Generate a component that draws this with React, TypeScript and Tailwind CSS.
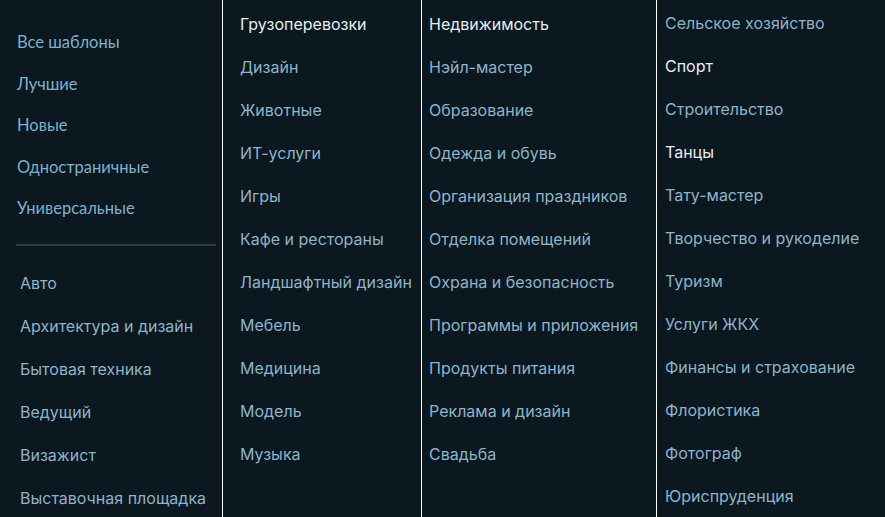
const topLinks = ['Все шаблоны', 'Лучшие', 'Новые', 'Одностраничные', 'Универсальные'];

const col1 = ['Авто', 'Архитектура и дизайн', 'Бытовая техника', 'Ведущий', 'Визажист', 'Выставочная площадка'];

const col2 = [
  'Грузоперевозки',
  'Дизайн',
  'Животные',
  'ИТ-услуги',
  'Игры',
  'Кафе и рестораны',
  'Ландшафтный дизайн',
  'Мебель',
  'Медицина',
  'Модель',
  'Музыка',
];

const col3 = [
  'Недвижимость',
  'Нэйл-мастер',
  'Образование',
  'Одежда и обувь',
  'Организация праздников',
  'Отделка помещений',
  'Охрана и безопасность',
  'Программы и приложения',
  'Продукты питания',
  'Реклама и дизайн',
  'Свадьба',
];

const col4 = [
  'Сельское хозяйство',
  'Спорт',
  'Строительство',
  'Танцы',
  'Тату-мастер',
  'Творчество и рукоделие',
  'Туризм',
  'Услуги ЖКХ',
  'Финансы и страхование',
  'Флористика',
  'Фотограф',
  'Юриспруденция',
];

// items rendered brighter in the picture (hovered / active)
const bright = ['Грузоперевозки', 'Недвижимость', 'Спорт', 'Танцы'];

function Item({ label }: { label: string }) {
  return (
    <a
      href="#"
      className={`flex h-[43px] items-center whitespace-nowrap text-[16px] ${
        bright.includes(label) ? 'text-[#e6edf1]' : 'text-[#8fb3c8]'
      }`}
    >
      {label}
    </a>
  );
}

export default function App() {
  return (
    <div className="flex h-[517px] w-[885px] overflow-hidden bg-[#0b1820] font-['Inter',sans-serif]">
      {/* Left: filters + first categories */}
      <div className="flex w-[222px] shrink-0 flex-col">
        <div className="flex flex-col pl-[17px] pt-[22px] font-['Lato','Open_Sans',sans-serif]">
          {topLinks.map((l) => (
            <a key={l} href="#" className="flex h-[41.5px] items-center text-[16.5px] text-[#7fb0cc]">
              {l}
            </a>
          ))}
        </div>
        <div className="ml-[16px] mr-[6px] mt-[14px] border-t-2 border-[#2a3a41]" />
        <div className="mt-[16px] flex flex-col pl-[20px]">
          {col1.map((l) => (
            <Item key={l} label={l} />
          ))}
        </div>
      </div>

      <div className="w-px shrink-0 bg-white" />

      <div className="flex w-[198px] shrink-0 flex-col pl-[17px] pt-[2px]">
        {col2.map((l) => (
          <Item key={l} label={l} />
        ))}
      </div>

      <div className="w-px shrink-0 bg-white" />

      <div className="flex w-[234px] shrink-0 flex-col pl-[7px] pt-[2px]">
        {col3.map((l) => (
          <Item key={l} label={l} />
        ))}
      </div>

      <div className="w-px shrink-0 bg-white" />

      <div className="flex flex-1 flex-col pl-[8px] pt-[2px]">
        {col4.map((l) => (
          <Item key={l} label={l} />
        ))}
      </div>
    </div>
  );
}
